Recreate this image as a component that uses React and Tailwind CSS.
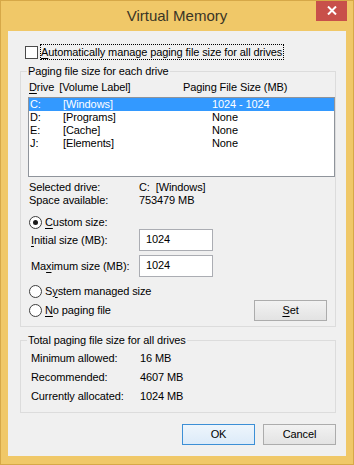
import React from "react";

function Radio({ checked }) {
  return (
    <span className="w-[13px] h-[13px] rounded-full border border-[#3c3c3c] bg-white flex items-center justify-center shrink-0">
      {checked && <span className="w-[5px] h-[5px] rounded-full bg-[#1a1a1a]" />}
    </span>
  );
}

function U({ children }) {
  return <span className="underline underline-offset-[2px]">{children}</span>;
}

const rows = [
  { d: "C:", l: "[Windows]", s: "1024 - 1024", sel: true },
  { d: "D:", l: "[Programs]", s: "None" },
  { d: "E:", l: "[Cache]", s: "None" },
  { d: "J:", l: "[Elements]", s: "None" },
];

export default function App() {
  return (
    <div className="w-[354px] h-[465px] bg-[#f0c868] border border-[#d6a848] flex flex-col font-['Liberation_Sans',Arial,sans-serif] text-[11px] tracking-[-0.1px] text-black overflow-hidden">
      {/* title bar */}
      <div className="relative h-[30px] shrink-0 flex items-center justify-center">
        <span className="text-[15px] tracking-normal text-[#3a3526] leading-none -mt-[1px]">Virtual Memory</span>
        <div className="absolute top-[-1px] right-[6px] w-[31px] h-[21px] bg-[#c8504a] flex items-center justify-center">
          <svg width="10" height="9" viewBox="0 0 10 9">
            <path d="M1 0.5 L9 8.5 M9 0.5 L1 8.5" stroke="#ffffff" strokeWidth="2" />
          </svg>
        </div>
      </div>

      {/* client area */}
      <div className="mx-[7px] h-[425px] bg-[#f0f0f0] flex flex-col shrink-0">
        {/* auto manage checkbox */}
        <div className="mt-[13px] h-[16px] flex items-center pl-[17px]">
          <span className="w-[13px] h-[13px] border border-[#4a4a4a] bg-white shrink-0" />
          <span className="ml-[2px] h-[16px] border border-dotted border-black leading-[14px] pr-[1px]">
            <U>A</U>utomatically manage paging file size for all drives
          </span>
        </div>

        {/* group 1 */}
        <fieldset className="mt-[4px] ml-[12px] mr-[10px] border border-[#dcdcdc] pb-[5px]">
          <legend className="ml-[6px] px-[1px] leading-[14px]">Paging file size for each drive</legend>
          <div className="mt-[2px] h-[14px] leading-[14px] flex pl-[8px]">
            <span className="w-[154px] flex">
              <span><U>D</U>rive</span>
              <span className="ml-[5px]">[Volume Label]</span>
            </span>
            <span>Paging File Size (MB)</span>
          </div>
          <div className="mt-[3px] ml-[7px] w-[307px] h-[80px] border border-[#8f949b] bg-white flex flex-col">
            {rows.map((r) => (
              <div
                key={r.d}
                className={
                  "h-[13px] leading-[13px] flex pl-[1px] " +
                  (r.sel ? "bg-[#3399ff] text-white" : "")
                }
              >
                <span className="w-[33px]">{r.d}</span>
                <span className="w-[149px]">{r.l}</span>
                <span>{r.s}</span>
              </div>
            ))}
          </div>
          <div className="mt-[4px] pl-[8px] grid grid-cols-[110px_1fr] leading-[13px]">
            <span>Selected drive:</span>
            <span className="whitespace-pre">C:  [Windows]</span>
            <span>Space available:</span>
            <span>753479 MB</span>
          </div>
          <div className="mt-[8px] h-[14px] flex items-center pl-[8px]">
            <Radio checked />
            <span className="ml-[3px]"><U>C</U>ustom size:</span>
          </div>
          <div className="h-[22px] flex items-center pl-[10px]">
            <span className="w-[108px]"><U>I</U>nitial size (MB):</span>
            <span className="w-[74px] h-[22px] border border-[#abadb3] bg-white pl-[6px] leading-[19px]">1024</span>
          </div>
          <div className="mt-[4px] h-[22px] flex items-center pl-[10px]">
            <span className="w-[108px]">Ma<U>x</U>imum size (MB):</span>
            <span className="w-[74px] h-[22px] border border-[#abadb3] bg-white pl-[6px] leading-[19px]">1024</span>
          </div>
          <div className="mt-[7px] h-[14px] flex items-center pl-[8px]">
            <Radio />
            <span className="ml-[3px]">S<U>y</U>stem managed size</span>
          </div>
          <div className="mt-[2px] h-[21px] flex items-center pl-[8px] pr-[8px]">
            <Radio />
            <span className="ml-[3px]"><U>N</U>o paging file</span>
            <button className="ml-auto w-[73px] h-[21px] border border-[#acacac] bg-gradient-to-b from-[#f2f2f2] to-[#e3e3e3] leading-[19px] text-center">
              <U>S</U>et
            </button>
          </div>
        </fieldset>

        {/* group 2 */}
        <fieldset className="mt-[6px] ml-[12px] mr-[10px] border border-[#dcdcdc] pb-[6px]">
          <legend className="ml-[6px] px-[1px] leading-[14px]">Total paging file size for all drives</legend>
          <div className="mt-[2px] pl-[10px] grid grid-cols-[109px_1fr] auto-rows-[19px] items-center">
            <span>Minimum allowed:</span>
            <span>16 MB</span>
            <span>Recommended:</span>
            <span>4607 MB</span>
            <span>Currently allocated:</span>
            <span>1024 MB</span>
          </div>
        </fieldset>

        {/* buttons */}
        <div className="mt-[11px] flex justify-end gap-[8px] pr-[10px]">
          <button className="w-[73px] h-[21px] border border-[#3c8fd6] bg-gradient-to-b from-[#eef5fc] to-[#dcebf9] leading-[19px] text-center">
            OK
          </button>
          <button className="w-[73px] h-[21px] border border-[#acacac] bg-gradient-to-b from-[#f2f2f2] to-[#e3e3e3] leading-[19px] text-center">
            Cancel
          </button>
        </div>
      </div>
    </div>
  );
}
